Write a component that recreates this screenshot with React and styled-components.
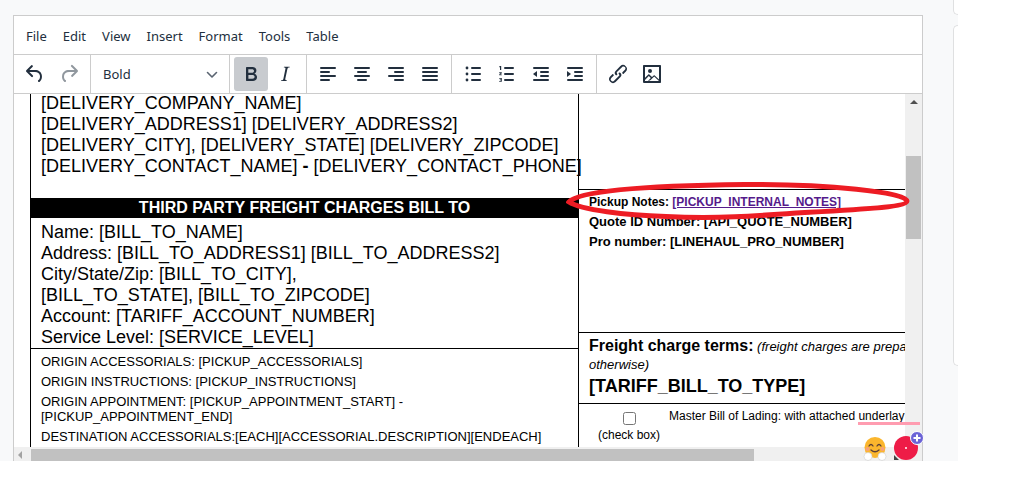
import React from 'react';
import styled, { createGlobalStyle } from 'styled-components';

const GlobalStyle = createGlobalStyle`
  html, body {
    margin: 0;
    padding: 0;
    background: #fff;
    overflow: hidden;
  }
`;

const Page = styled.div`
  display: flex;
  align-items: flex-start;
  width: 1025px;
  height: 493px;
  overflow: hidden;
  background: #fff;
`;

const Backdrop = styled.div`
  flex: 0 0 958px;
  height: 461px;
  box-sizing: border-box;
  padding: 15px 35px 0 13px;
  background: #f8f9fa;
  overflow: hidden;
`;

const SideColumn = styled.div`
  flex: 0 0 5px;
  margin-left: -5px;
  display: flex;
  flex-direction: column;
  gap: 10px;
  margin-top: -5px;
`;

const SideCard = styled.div`
  height: ${p => p.$height}px;
  background: #fff;
  border: 1px solid #dfe0e1;
  border-right: 0;
  border-radius: 5px 0 0 5px;
  box-sizing: border-box;
`;

const Editor = styled.div`
  position: relative;
  height: 446px;
  box-sizing: border-box;
  border: 1px solid #ccc;
  border-bottom: 0;
  background: #fff;
  font-family: "Noto Sans", sans-serif;
  color: #222f3e;
`;

const MenuBar = styled.div`
  display: flex;
  align-items: center;
  height: 39px;
  padding: 1px 4px 0;
  box-sizing: border-box;
  border-bottom: 1px solid #ccc;
`;

const MenuItem = styled.span`
  padding: 0 8px;
  font-size: 13px;
  line-height: 20px;
`;

const Toolbar = styled.div`
  display: flex;
  height: 39px;
  box-sizing: border-box;
  border-bottom: 1px solid #ccc;
`;

const ToolGroup = styled.div`
  display: flex;
  align-items: center;
  padding: 0 4px;
  border-right: ${p => (p.$last ? 0 : '1px solid #ccc')};
`;

const ToolButton = styled.button`
  display: flex;
  align-items: center;
  justify-content: center;
  width: 34px;
  height: 34px;
  margin: 0;
  padding: 0;
  border: 0;
  border-radius: 3px;
  background: ${p => (p.$active ? '#c8cbcf' : 'transparent')};
  color: ${p => (p.$disabled ? 'rgba(34,47,62,.5)' : '#222f3e')};
`;

const Icon = styled.svg`
  width: 24px;
  height: 24px;
  fill: currentColor;
`;

const FormatSelect = styled.div`
  display: flex;
  align-items: center;
  justify-content: space-between;
  width: 130px;
  height: 34px;
  box-sizing: border-box;
  padding: 0 1px 0 8px;
  font-size: 13px;
  color: #222f3e;
`;

const EditorBody = styled.div`
  display: grid;
  grid-template-columns: 891px 17px;
  grid-template-rows: 353px 14px;
  height: 367px;
`;

const Viewport = styled.div`
  overflow: hidden;
  font-family: "Liberation Sans", Arial, sans-serif;
  color: #000;
`;

const Sheet = styled.div`
  display: flex;
  width: 1100px;
  margin-left: 16px;
`;

const LeftColumn = styled.div`
  flex: 0 0 549px;
  min-width: 0;
  box-sizing: border-box;
  border-left: 1px solid #000;
  border-right: 1px solid #000;
`;

const RightColumn = styled.div`
  flex: 1;
  min-width: 0;
  font-size: 12px;
`;

const Block = styled.div`
  display: flow-root;
  font-size: 18px;
  line-height: 21px;
  padding: ${p => p.$pad ?? '0 0 0 10px'};
  white-space: nowrap;
  height: ${p => p.$height}px;
  box-sizing: border-box;
`;

const AddressLines = styled.div`
  margin-top: -1px;
`;

const BlackBar = styled.div`
  background: #000;
  color: #fff;
  height: 20px;
  font-size: 16px;
  font-weight: bold;
  line-height: 19px;
  text-align: center;
`;

const NotesSection = styled.div`
  border-top: 1px solid #000;
  padding: 5px 10px 0;
  font-size: 13px;
`;

const NoteLine = styled.div`
  line-height: 15px;
  margin-bottom: 5px;
`;

const RightSpacer = styled.div`
  height: 95px;
`;

const PickupSection = styled.div`
  border-top: 1px solid #000;
  height: 143px;
  box-sizing: border-box;
  padding: 2px 10px 0;
  font-weight: bold;
`;

const PickupLine = styled.div`
  font-size: ${p => p.$size}px;
  line-height: 20px;
  white-space: nowrap;
`;

const LinkText = styled.span`
  color: #551a8b;
  text-decoration: underline;
`;

const TermsSection = styled.div`
  border-top: 1px solid #000;
  width: 450px;
  height: 71px;
  box-sizing: border-box;
  padding: 4px 10px 0;
`;

const TermsTitle = styled.div`
  font-size: 13px;
  line-height: 18px;
  height: 36px;
`;

const TermsHeading = styled.b`
  font-size: 16px;
`;

const TariffType = styled.div`
  font-size: 18px;
  font-weight: bold;
  line-height: 26px;
`;

const MasterSection = styled.div`
  border-top: 1px solid #000;
  display: flex;
  font-size: 12px;
`;

const CheckCell = styled.div`
  flex: 0 0 90px;
  box-sizing: border-box;
  display: flex;
  flex-direction: column;
  align-items: center;
  padding: 8px 0 0 10px;
  line-height: 14px;
`;

const CheckBox = styled.input`
  width: 13px;
  height: 13px;
  margin: 0 0 3px;
`;

const MasterText = styled.div`
  padding-top: 5px;
  white-space: nowrap;
  line-height: 14px;
`;

const VerticalTrack = styled.div`
  background: #f0f0f0;
  padding: 0 1px;
  display: flex;
  flex-direction: column;
  align-items: stretch;
`;

const ArrowUp = styled.div`
  align-self: center;
  margin-top: 6px;
  width: 0;
  height: 0;
  border-left: 4px solid transparent;
  border-right: 4px solid transparent;
  border-bottom: 4px solid #505050;
`;

const VerticalThumb = styled.div`
  margin-top: 52px;
  height: 83px;
  background: #c1c1c1;
`;

const HorizontalTrack = styled.div`
  background: #f0f0f0;
  display: flex;
  align-items: flex-start;
  grid-column: 1 / 3;
  padding-top: 2px;
`;

const ArrowLeft = styled.div`
  margin: 2px 0 0 4px;
  width: 0;
  height: 0;
  border-top: 4px solid transparent;
  border-bottom: 4px solid transparent;
  border-right: 4px solid #a3a3a3;
`;

const HorizontalThumb = styled.div`
  margin-left: 9px;
  width: 723px;
  height: 12px;
  background: #c1c1c1;
`;

const RedEllipse = styled.svg`
  position: absolute;
  left: 552px;
  top: 166px;
  width: 346px;
  height: 42px;
  pointer-events: none;
`;

const SpellUnderline = styled.div`
  position: absolute;
  left: 844px;
  top: 406px;
  width: 62px;
  height: 3px;
  background: #ff9cb0;
`;

const EmojiWidget = styled.svg`
  position: absolute;
  left: 849px;
  top: 421px;
  width: 24px;
  height: 24px;
`;

const BadgeWidget = styled.svg`
  position: absolute;
  left: 880px;
  top: 415px;
  width: 30px;
  height: 30px;
`;

const PATHS = {
  undo: 'M6.4 8H12c3.7 0 6.2 2 6.8 5.1.6 2.7-.4 5.6-2.3 6.8a1 1 0 0 1-1-1.8c1.1-.6 1.8-2.7 1.4-4.6-.5-2.1-2.1-3.5-4.9-3.5H6.4l3.3 3.3a1 1 0 1 1-1.4 1.4l-5-5a1 1 0 0 1 0-1.4l5-5a1 1 0 0 1 1.4 1.4L6.4 8z',
  redo: 'M17.6 10H12c-2.8 0-4.4 1.4-4.9 3.5-.4 2 .3 4 1.4 4.6a1 1 0 1 1-1 1.8c-2-1.2-2.9-4.1-2.3-6.8.6-3 3-5.1 6.8-5.1h5.6l-3.3-3.3a1 1 0 1 1 1.4-1.4l5 5a1 1 0 0 1 0 1.4l-5 5a1 1 0 0 1-1.4-1.4l3.3-3.3z',
  bold: 'M7.8 19c-.3 0-.5 0-.6-.2l-.2-.5V5.7c0-.2 0-.4.2-.5l.6-.2h5c1.5 0 2.7.3 3.5 1 .7.6 1.1 1.4 1.1 2.5a3 3 0 0 1-.6 1.9c-.4.6-1 1-1.6 1.2.4.1.9.3 1.3.6s.8.7 1 1.2c.4.4.5 1 .5 1.6 0 1.3-.4 2.3-1.3 3-.8.7-2.1 1-3.8 1H7.8zm5-8.3c.6 0 1.2-.1 1.6-.5.4-.3.6-.7.6-1.3 0-1.1-.8-1.7-2.3-1.7H9.3v3.5h3.4zm.5 6c.7 0 1.3-.1 1.7-.4.4-.4.6-.9.6-1.5s-.2-1-.7-1.4c-.4-.3-1-.4-2-.4H9.4v3.8h4z',
  italic: 'M16.7 4.7l-.1.9h-.3c-.6 0-1 0-1.4.3-.3.3-.4.6-.5 1.1l-2.1 9.8v.6c0 .5.4.8 1.4.8h.2l-.2.8H8l.2-.8h.2c1.1 0 1.8-.5 2-1.5l2-9.8.1-.5c0-.6-.4-.8-1.4-.8h-.3l.2-.9h5.8z',
  link: 'M6.2 12.3a1 1 0 0 1 1.4 1.4l-2.1 2.1a2 2 0 1 0 2.8 2.8l4.8-4.8a1 1 0 0 0 0-1.4 1 1 0 1 1 1.4-1.3 2.9 2.9 0 0 1 0 4L9.6 20a3.9 3.9 0 0 1-5.5-5.5l2-2zm11.6-.6a1 1 0 0 1-1.4-1.4l2-2a2 2 0 1 0-2.7-2.7L11 10.1a1 1 0 0 0 0 1.4A1 1 0 1 1 9.6 13a2.9 2.9 0 0 1 0-4L14.4 4a3.9 3.9 0 0 1 5.5 5.5l-2 2z',
  image: 'M5 15.7l3.3-3.2c.3-.3.7-.3 1 0L12 15l1.7-1.5c.3-.3.7-.3 1 0l4.3 4.1V5H5v10.7zM5 18v1h3l2.8-2.9-2-2L5 18zm14 1v-.1l-4.8-4.5-3.6 3.5L8.5 19H19zM4 3h16c.6 0 1 .4 1 1v16c0 .6-.4 1-1 1H4a1 1 0 0 1-1-1V4c0-.6.4-1 1-1zm6 8a2 2 0 1 1 0-4 2 2 0 0 1 0 4z',
};

// x, y, width of each bar in the line-based toolbar icons
const BARS = {
  alignLeft: [[4, 5, 16], [4, 9, 10], [4, 13, 16], [4, 17, 10]],
  alignCenter: [[4, 5, 16], [7, 9, 10], [4, 13, 16], [7, 17, 10]],
  alignRight: [[4, 5, 16], [10, 9, 10], [4, 13, 16], [10, 17, 10]],
  justify: [[4, 5, 16], [4, 9, 16], [4, 13, 16], [4, 17, 16]],
};

const Bars = ({ name }) => (
  <Icon viewBox="0 0 24 24">
    {BARS[name].map(([x, y, w]) => (
      <rect key={y} x={x} y={y} width={w} height="2" rx="1" />
    ))}
  </Icon>
);

const Glyph = ({ name }) => (
  <Icon viewBox="0 0 24 24"><path d={PATHS[name]} /></Icon>
);

const BulletList = () => (
  <Icon viewBox="0 0 24 24">
    <rect x="10" y="5" width="10" height="2" rx="1" />
    <rect x="10" y="11" width="10" height="2" rx="1" />
    <rect x="10" y="17" width="10" height="2" rx="1" />
    <circle cx="6" cy="6" r="1.4" />
    <circle cx="6" cy="12" r="1.4" />
    <circle cx="6" cy="18" r="1.4" />
  </Icon>
);

const NumberList = () => (
  <Icon viewBox="0 0 24 24">
    <rect x="9" y="5" width="10" height="2" rx="1" />
    <rect x="9" y="11" width="10" height="2" rx="1" />
    <rect x="9" y="17" width="10" height="2" rx="1" />
    <path d="M5 4h1.2v4H5V5.2H4.2V4.6z" />
    <path d="M4.2 10.3h2.6v.9l-1.5 1.2h1.5v.9H4.2v-.9l1.500-1.200H4.200z" />
    <path d="M4.200 16h2.600v3.800H4.200v-.8h1.600v-.7H4.800v-.7h1v-.8H4.200z" />
  </Icon>
);

const Outdent = () => (
  <Icon viewBox="0 0 24 24">
    <rect x="4" y="5" width="16" height="2" rx="1" />
    <rect x="11" y="9" width="9" height="2" rx="1" />
    <rect x="11" y="13" width="9" height="2" rx="1" />
    <rect x="4" y="17" width="16" height="2" rx="1" />
    <path d="M8 9v6l-4-3z" />
  </Icon>
);

const Indent = () => (
  <Icon viewBox="0 0 24 24">
    <rect x="4" y="5" width="16" height="2" rx="1" />
    <rect x="11" y="9" width="9" height="2" rx="1" />
    <rect x="11" y="13" width="9" height="2" rx="1" />
    <rect x="4" y="17" width="16" height="2" rx="1" />
    <path d="M4 9v6l4-3z" />
  </Icon>
);

const MENU = ['File', 'Edit', 'View', 'Insert', 'Format', 'Tools', 'Table'];

const BILL_LINES = [
  'Name: [BILL_TO_NAME]',
  'Address: [BILL_TO_ADDRESS1] [BILL_TO_ADDRESS2]',
  'City/State/Zip: [BILL_TO_CITY],',
  '[BILL_TO_STATE], [BILL_TO_ZIPCODE]',
  'Account: [TARIFF_ACCOUNT_NUMBER]',
  'Service Level: [SERVICE_LEVEL]',
];

const NOTE_LINES = [
  'ORIGIN ACCESSORIALS: [PICKUP_ACCESSORIALS]',
  'ORIGIN INSTRUCTIONS: [PICKUP_INSTRUCTIONS]',
  'ORIGIN APPOINTMENT: [PICKUP_APPOINTMENT_START] - [PICKUP_APPOINTMENT_END]',
  'DESTINATION ACCESSORIALS:[EACH][ACCESSORIAL.DESCRIPTION][ENDEACH]',
];

export default function App() {
  return (
    <Page>
      <GlobalStyle />
      <Backdrop>
        <Editor>
          <MenuBar>
            {MENU.map(item => <MenuItem key={item}>{item}</MenuItem>)}
          </MenuBar>
          <Toolbar>
            <ToolGroup>
              <ToolButton><Glyph name="undo" /></ToolButton>
              <ToolButton $disabled><Glyph name="redo" /></ToolButton>
            </ToolGroup>
            <ToolGroup>
              <FormatSelect>
                Bold
                <Icon viewBox="0 0 24 24"><path d="M7.5 10.5l4.5 4.5 4.5-4.5" fill="none" stroke="#5a6471" strokeWidth="1.6" strokeLinecap="round" strokeLinejoin="round" /></Icon>
              </FormatSelect>
            </ToolGroup>
            <ToolGroup>
              <ToolButton $active><Glyph name="bold" /></ToolButton>
              <ToolButton><Glyph name="italic" /></ToolButton>
            </ToolGroup>
            <ToolGroup>
              <ToolButton><Bars name="alignLeft" /></ToolButton>
              <ToolButton><Bars name="alignCenter" /></ToolButton>
              <ToolButton><Bars name="alignRight" /></ToolButton>
              <ToolButton><Bars name="justify" /></ToolButton>
            </ToolGroup>
            <ToolGroup>
              <ToolButton><BulletList /></ToolButton>
              <ToolButton><NumberList /></ToolButton>
              <ToolButton><Outdent /></ToolButton>
              <ToolButton><Indent /></ToolButton>
            </ToolGroup>
            <ToolGroup $last>
              <ToolButton><Glyph name="link" /></ToolButton>
              <ToolButton><Glyph name="image" /></ToolButton>
            </ToolGroup>
          </Toolbar>
          <EditorBody>
            <Viewport>
              <Sheet>
                <LeftColumn>
                  <Block $height={104}>
                    <AddressLines>
                      <div>[DELIVERY_COMPANY_NAME]</div>
                      <div>[DELIVERY_ADDRESS1] [DELIVERY_ADDRESS2]</div>
                      <div>[DELIVERY_CITY], [DELIVERY_STATE] [DELIVERY_ZIPCODE]</div>
                      <div>[DELIVERY_CONTACT_NAME] <b>-</b> [DELIVERY_CONTACT_PHONE]</div>
                    </AddressLines>
                  </Block>
                  <BlackBar>THIRD PARTY FREIGHT CHARGES BILL TO</BlackBar>
                  <Block $pad="4px 0 0 10px" $height={130}>
                    {BILL_LINES.map(line => <div key={line}>{line}</div>)}
                  </Block>
                  <NotesSection>
                    {NOTE_LINES.map(line => <NoteLine key={line}>{line}</NoteLine>)}
                  </NotesSection>
                </LeftColumn>
                <RightColumn>
                  <RightSpacer />
                  <PickupSection>
                    <PickupLine $size={12}>Pickup Notes: <LinkText>[PICKUP_INTERNAL_NOTES]</LinkText></PickupLine>
                    <PickupLine $size={13}>Quote ID Number: [API_QUOTE_NUMBER]</PickupLine>
                    <PickupLine $size={13}>Pro number: [LINEHAUL_PRO_NUMBER]</PickupLine>
                  </PickupSection>
                  <TermsSection>
                    <TermsTitle>
                      <TermsHeading>Freight charge terms:</TermsHeading> <i>(freight charges are prepaid unless marked otherwise)</i>
                    </TermsTitle>
                    <TariffType>[TARIFF_BILL_TO_TYPE]</TariffType>
                  </TermsSection>
                  <MasterSection>
                    <CheckCell>
                      <CheckBox type="checkbox" readOnly />
                      (check box)
                    </CheckCell>
                    <MasterText>Master Bill of Lading: with attached underlay</MasterText>
                  </MasterSection>
                </RightColumn>
              </Sheet>
            </Viewport>
            <VerticalTrack>
              <ArrowUp />
              <VerticalThumb />
            </VerticalTrack>
            <HorizontalTrack>
              <ArrowLeft />
              <HorizontalThumb />
            </HorizontalTrack>
          </EditorBody>
          <RedEllipse viewBox="0 0 346 42">
            <path d="M3 20 C10 12 50 4 179 2.5 C260 2 341 10 341 19 C341 25 290 28 230 31 C190 34 150 37 100 34.5 C60 33 15 28 3 20 Z" fill="none" stroke="#ed1c24" strokeWidth="5" />
          </RedEllipse>
          <SpellUnderline />
          <EmojiWidget viewBox="0 0 24 24">
            <circle cx="12" cy="10.5" r="10.5" fill="#fbb62d" />
            <path d="M6 9q2-3 4 0M14 9q2-3 4 0" fill="none" stroke="#5d4037" strokeWidth="1.3" strokeLinecap="round" />
            <path d="M8 13q4 3.5 8 0" fill="none" stroke="#5d4037" strokeWidth="1.3" strokeLinecap="round" />
            <circle cx="4.5" cy="12" r="2" fill="#f7a07a" />
            <circle cx="19.5" cy="12" r="2" fill="#f7a07a" />
            <circle cx="5" cy="19.5" r="4" fill="#fff" stroke="#ccc" strokeWidth=".6" />
            <circle cx="19" cy="19.5" r="4" fill="#fff" stroke="#ccc" strokeWidth=".6" />
          </EmojiWidget>
          <BadgeWidget viewBox="0 0 30 30">
            <path d="M0 24v5h5z" fill="#444" />
            <circle cx="12" cy="17" r="12" fill="#ee1c47" />
            <circle cx="12" cy="17" r="1" fill="#fff" />
            <circle cx="23" cy="7" r="6.5" fill="#6b63d6" stroke="#fff" strokeWidth="1" />
            <path d="M23 3.5v7M19.5 7h7" stroke="#fff" strokeWidth="2" />
          </BadgeWidget>
        </Editor>
      </Backdrop>
      <SideColumn>
        <SideCard $height={20} />
        <SideCard $height={341} />
      </SideColumn>
    </Page>
  );
}
